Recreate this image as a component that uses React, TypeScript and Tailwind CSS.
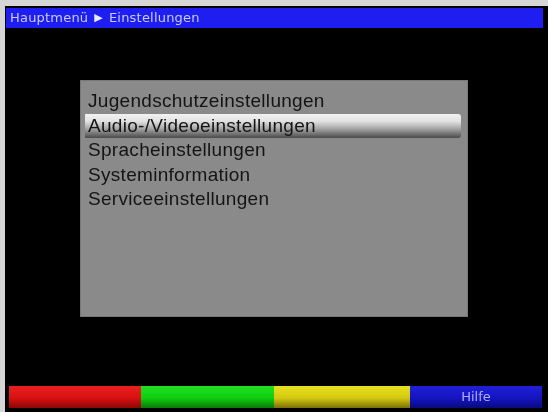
import React from 'react';

const items = [
  'Jugendschutzeinstellungen',
  'Audio-/Videoeinstellungen',
  'Spracheinstellungen',
  'Systeminformation',
  'Serviceeinstellungen',
];

export default function App() {
  const selected = 1;

  return (
    <div className="w-[548px] h-[412px] bg-[#d6d6d6] pl-[5px] pt-[6px] overflow-hidden">
      <div className="w-full h-full bg-black flex flex-col font-['Liberation_Sans',Arial,sans-serif]">
        {/* title bar */}
        <div className="ml-[1px] mt-[2px] w-[537px] h-[20px] bg-[#1e1ef0] flex items-center pl-[4px] font-['DejaVu_Sans',sans-serif] text-[13px] text-[#c6ccff] tracking-[0.2px] blur-[0.4px]">
          Hauptmenü <span className="mx-[6px] text-[11px] text-[#e8eaff]">▶</span> Einstellungen
        </div>

        {/* menu panel */}
        <div className="ml-[75px] mt-[52px] w-[388px] h-[237px] bg-[#8a8a8a] border border-[#777] pl-[4px] pr-[6px] pt-[8px]">
          {items.map((label, i) => (
            <div
              key={label}
              className={`h-[24.5px] flex items-center pl-[3px] text-[19px] leading-[24px] tracking-[0.3px] text-[#141414] blur-[0.5px] ${
                i === selected
                  ? 'rounded-r-[3px] bg-[linear-gradient(to_bottom,#f2f2f2_0%,#e2e2e2_30%,#a8a8a8_60%,#4a4a4a_100%)]'
                  : ''
              }`}
            >
              {label}
            </div>
          ))}
        </div>

        {/* colour keys */}
        <div className="mt-auto mb-[4px] ml-[4px] w-[533px] h-[22px] flex">
          <div className="w-[132px] bg-[linear-gradient(to_bottom,#e82020_0%,#d81010_55%,#8a0606_100%)]" />
          <div className="w-[133px] bg-[linear-gradient(to_bottom,#20e020_0%,#10cc10_55%,#077a07_100%)]" />
          <div className="w-[136px] bg-[linear-gradient(to_bottom,#e8e020_0%,#d2c810_55%,#7a7006_100%)]" />
          <div className="flex-1 bg-[linear-gradient(to_bottom,#2020d8_0%,#1414c0_55%,#0a0a80_100%)] flex items-center justify-center font-['DejaVu_Sans',sans-serif] text-[13px] text-[#aab0ff] blur-[0.4px]">
            Hilfe
          </div>
        </div>
      </div>
    </div>
  );
}
